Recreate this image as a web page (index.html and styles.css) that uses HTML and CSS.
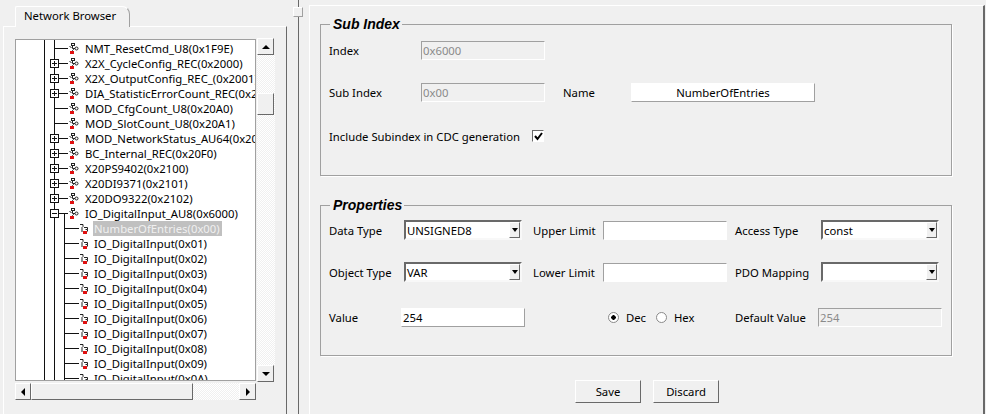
FILE: index.html
```html
<!DOCTYPE html>
<html lang="en">
<head>
    <meta charset="UTF-8">
    <meta name="viewport" content="width=device-width, initial-scale=1.0">
    <title>Network Browser</title>
    <link rel="stylesheet" href="styles.css">
</head>
<body>
    <svg class="icon-defs" width="0" height="0">
        <symbol id="icon-object" viewBox="0 0 11 11">
            <rect x="3.500" y="0.500" width="3" height="2" fill="#fff" stroke="#222"/>
            <path d="M4.500 3v2.500l1 1-1 1v1M1.500 3.500l2 1M5 5.500h2" fill="none" stroke="#222"/>
            <circle cx="8.500" cy="5.500" r="1.500" fill="#fff" stroke="#222"/>
            <rect x="2" y="8" width="4" height="3" fill="#e01010"/>
        </symbol>
        <symbol id="icon-entry" viewBox="0 0 10 11">
            <path d="M1 1.500h3v2l-1 1v4.500" fill="none" stroke="#222"/>
            <path d="M5 4.500h3.500v2h-2M8.500 6.500v2" fill="none" stroke="#222"/>
            <rect x="4" y="8" width="4" height="3" fill="#e01010"/>
        </symbol>
    </svg>

    <div class="window">
        <section class="browser">
            <div class="tab">Network Browser</div>
            <div class="tab-pane">
                <div class="tree-wrap">
                    <div class="tree">
                        <i class="guide guide-a"></i>
                        <i class="guide guide-b"></i>
                        <i class="guide guide-c"></i>

                        <div class="row"><i class="link"></i><svg class="icon"><use href="#icon-object"/></svg><span class="name">NMT_ResetCmd_U8(0x1F9E)</span></div>
                        <div class="row"><b class="plus"></b><i class="link"></i><svg class="icon"><use href="#icon-object"/></svg><span class="name">X2X_CycleConfig_REC(0x2000)</span></div>
                        <div class="row"><b class="plus"></b><i class="link"></i><svg class="icon"><use href="#icon-object"/></svg><span class="name">X2X_OutputConfig_REC_(0x2001)</span></div>
                        <div class="row"><b class="plus"></b><i class="link"></i><svg class="icon"><use href="#icon-object"/></svg><span class="name">DIA_StatisticErrorCount_REC(0x2000)</span></div>
                        <div class="row"><i class="link"></i><svg class="icon"><use href="#icon-object"/></svg><span class="name">MOD_CfgCount_U8(0x20A0)</span></div>
                        <div class="row"><i class="link"></i><svg class="icon"><use href="#icon-object"/></svg><span class="name">MOD_SlotCount_U8(0x20A1)</span></div>
                        <div class="row"><b class="plus"></b><i class="link"></i><svg class="icon"><use href="#icon-object"/></svg><span class="name">MOD_NetworkStatus_AU64(0x2000)</span></div>
                        <div class="row"><b class="plus"></b><i class="link"></i><svg class="icon"><use href="#icon-object"/></svg><span class="name">BC_Internal_REC(0x20F0)</span></div>
                        <div class="row"><b class="plus"></b><i class="link"></i><svg class="icon"><use href="#icon-object"/></svg><span class="name">X20PS9402(0x2100)</span></div>
                        <div class="row"><b class="plus"></b><i class="link"></i><svg class="icon"><use href="#icon-object"/></svg><span class="name">X20DI9371(0x2101)</span></div>
                        <div class="row"><b class="plus"></b><i class="link"></i><svg class="icon"><use href="#icon-object"/></svg><span class="name">X20DO9322(0x2102)</span></div>
                        <div class="row"><b class="plus minus"></b><i class="link"></i><svg class="icon"><use href="#icon-object"/></svg><span class="name">IO_DigitalInput_AU8(0x6000)</span></div>

                        <div class="row child"><i class="link"></i><svg class="icon"><use href="#icon-entry"/></svg><span class="name selected">NumberOfEntries(0x00)</span></div>
                        <div class="row child"><i class="link"></i><svg class="icon"><use href="#icon-entry"/></svg><span class="name">IO_DigitalInput(0x01)</span></div>
                        <div class="row child"><i class="link"></i><svg class="icon"><use href="#icon-entry"/></svg><span class="name">IO_DigitalInput(0x02)</span></div>
                        <div class="row child"><i class="link"></i><svg class="icon"><use href="#icon-entry"/></svg><span class="name">IO_DigitalInput(0x03)</span></div>
                        <div class="row child"><i class="link"></i><svg class="icon"><use href="#icon-entry"/></svg><span class="name">IO_DigitalInput(0x04)</span></div>
                        <div class="row child"><i class="link"></i><svg class="icon"><use href="#icon-entry"/></svg><span class="name">IO_DigitalInput(0x05)</span></div>
                        <div class="row child"><i class="link"></i><svg class="icon"><use href="#icon-entry"/></svg><span class="name">IO_DigitalInput(0x06)</span></div>
                        <div class="row child"><i class="link"></i><svg class="icon"><use href="#icon-entry"/></svg><span class="name">IO_DigitalInput(0x07)</span></div>
                        <div class="row child"><i class="link"></i><svg class="icon"><use href="#icon-entry"/></svg><span class="name">IO_DigitalInput(0x08)</span></div>
                        <div class="row child"><i class="link"></i><svg class="icon"><use href="#icon-entry"/></svg><span class="name">IO_DigitalInput(0x09)</span></div>
                        <div class="row child"><i class="link"></i><svg class="icon"><use href="#icon-entry"/></svg><span class="name">IO_DigitalInput(0x0A)</span></div>
                    </div>

                    <div class="vscroll">
                        <div class="sbtn"><i class="arrow-up"></i></div>
                        <div class="vtrack"><div class="vthumb"></div></div>
                        <div class="sbtn"><i class="arrow-down"></i></div>
                    </div>

                    <div class="hscroll">
                        <div class="sbtn sbtn-left"><i class="arrow-left"></i></div>
                        <div class="hthumb"></div>
                        <div class="htrack"></div>
                        <div class="sbtn"><i class="arrow-right"></i></div>
                    </div>
                </div>
            </div>
        </section>

        <div class="splitter"><i class="splitter-handle"></i></div>

        <main class="editor">
            <fieldset class="group group-sub">
                <legend>Sub Index</legend>
                <div class="sub-row sub-row-first">
                    <label class="sub-label">Index</label>
                    <div class="field readonly">0x6000</div>
                </div>
                <div class="sub-row">
                    <label class="sub-label">Sub Index</label>
                    <div class="field readonly">0x00</div>
                    <label class="name-label">Name</label>
                    <div class="field name-field">NumberOfEntries</div>
                </div>
                <div class="sub-row">
                    <label class="include-label">Include Subindex in CDC generation</label>
                    <span class="check">
                        <svg width="9" height="9" viewBox="0 0 9 9"><path d="M1 4l2.500 3L8 1" fill="none" stroke="#000" stroke-width="2"/></svg>
                    </span>
                </div>
            </fieldset>

            <fieldset class="group group-props">
                <legend>Properties</legend>
                <div class="props">
                    <label>Data Type</label>
                    <div class="combo">UNSIGNED8<span class="combo-btn"><i class="arrow-down"></i></span></div>
                    <label class="col-mid">Upper Limit</label>
                    <div class="field"></div>
                    <label class="col-far">Access Type</label>
                    <div class="combo">const<span class="combo-btn"><i class="arrow-down"></i></span></div>

                    <label>Object Type</label>
                    <div class="combo">VAR<span class="combo-btn"><i class="arrow-down"></i></span></div>
                    <label class="col-mid">Lower Limit</label>
                    <div class="field"></div>
                    <label class="col-far">PDO Mapping</label>
                    <div class="combo"><span class="combo-btn"><i class="arrow-down"></i></span></div>

                    <label>Value</label>
                    <div class="field value">254</div>
                    <div class="radios">
                        <span class="radio on"></span><span class="radio-text">Dec</span>
                        <span class="radio"></span><span class="radio-text">Hex</span>
                    </div>
                    <label class="col-far">Default Value</label>
                    <div class="field readonly value">254</div>
                </div>
            </fieldset>

            <div class="actions">
                <button type="button" class="btn">Save</button>
                <button type="button" class="btn">Discard</button>
            </div>
        </main>
    </div>
</body>
</html>
```

FILE: styles.css
```css
/* General page */
body {
    margin: 0;
    background-color: #f0f0f0;
    font-family: "Noto Sans", sans-serif;
    font-size: 11.3px;
    color: #000;
}

.icon-defs {
    position: absolute;
}

.window {
    display: flex;
    height: 414px;
    padding-top: 6px;
    box-sizing: border-box;
    overflow: hidden;
}

/* Left side, network browser */
.browser {
    display: flex;
    flex-direction: column;
    width: 284px;
    margin-left: 3px;
    flex: none;
}

.tab {
    position: relative;
    width: 115px;
    height: 21px;
    margin: 0 0 -1px 12px;
    padding-left: 8px;
    box-sizing: border-box;
    line-height: 18px;
    background-color: #f0f0f0;
    border: 1px solid #fff;
    border-right: 1px solid #a0a0a0;
    border-bottom: none;
    border-radius: 2px 8px 0 0;
}

.tab-pane {
    flex: 1;
    padding: 11px 0 0 11px;
    box-sizing: border-box;
    border-top: 1px solid #fff;
    border-left: 1px solid #fff;
    border-right: 1px solid #696969;
}

.tree-wrap {
    display: grid;
    grid-template-columns: 241px 18px;
    grid-template-rows: 344px 17px;
    column-gap: 1px;
    row-gap: 1px;
}

.tree {
    position: relative;
    height: 342px;
    margin-top: 1px;
    padding-top: 1px;
    box-sizing: border-box;
    overflow: hidden;
    background-color: #fff;
    border: 1px solid #a0a0a0;
}

.guide {
    position: absolute;
    top: 0;
    bottom: 0;
    width: 1px;
    background-color: #111;
}

.guide-a { left: 28px; }
.guide-b { left: 38px; }
.guide-c { left: 48px; top: 173px; }

.row {
    position: relative;
    display: flex;
    align-items: center;
    height: 15px;
    padding-left: 39px;
    white-space: nowrap;
}

.row.child {
    padding-left: 49px;
}

.link {
    width: 13px;
    height: 1px;
    flex: none;
    background-color: #111;
}

.row.child .link {
    width: 14px;
}

.icon {
    width: 11px;
    height: 11px;
    flex: none;
}

.row.child .icon {
    width: 10px;
}

.name {
    margin-left: 5px;
    padding: 0 1px;
    line-height: 15px;
}

.row.child .name {
    margin-left: 4px;
    padding: 0 2px 0 1px;
}

.name.selected {
    background-color: #c0c0c0;
    color: #f0f0f0;
}

/* the little +/- box sits on top of the row line */
.plus {
    position: absolute;
    left: 34px;
    top: 3px;
    width: 7px;
    height: 7px;
    background:
        linear-gradient(#111, #111) center / 5px 1px no-repeat,
        linear-gradient(#111, #111) center / 1px 5px no-repeat,
        #fff;
    border: 1px solid #111;
}

.plus.minus {
    background:
        linear-gradient(#111, #111) center / 5px 1px no-repeat,
        #fff;
}

/* Scrollbars */
.vscroll {
    display: flex;
    flex-direction: column;
    height: 344px;
}

.hscroll {
    display: flex;
    height: 17px;
    grid-column: 1;
}

.sbtn {
    display: flex;
    align-items: center;
    justify-content: center;
    flex: none;
    width: 17px;
    height: 17px;
    box-sizing: border-box;
    background-color: #f0f0f0;
    border: 1px solid;
    border-color: #fff #696969 #696969 #fff;
}

.sbtn-left {
    width: 16px;
}

.vtrack,
.htrack {
    flex: 1;
    background: repeating-conic-gradient(#f0f0f0 0 25%, #fff 0 50%) 0 0 / 2px 2px;
}

.vthumb {
    width: 17px;
    height: 22px;
    margin-top: 38px;
    box-sizing: border-box;
    background-color: #f0f0f0;
    border: 1px solid;
    border-color: #fff #696969 #696969 #fff;
}

.hthumb {
    width: 162px;
    height: 17px;
    flex: none;
    box-sizing: border-box;
    background-color: #f0f0f0;
    border: 1px solid;
    border-color: #fff #696969 #696969 #fff;
}

.arrow-up,
.arrow-down {
    width: 0;
    height: 0;
    border-left: 4px solid transparent;
    border-right: 4px solid transparent;
}

.arrow-up { border-bottom: 4px solid #000; }
.arrow-down { border-top: 4px solid #000; }

.arrow-left,
.arrow-right {
    width: 0;
    height: 0;
    border-top: 4px solid transparent;
    border-bottom: 4px solid transparent;
}

.arrow-left { border-right: 4px solid #000; }
.arrow-right { border-left: 4px solid #000; }

/* Splitter */
.splitter {
    position: relative;
    width: 1px;
    flex: none;
    margin: -6px 0 0 11px;
    background-color: #696969;
}

.splitter-handle {
    position: absolute;
    left: -5px;
    top: 7px;
    width: 10px;
    height: 10px;
    box-sizing: border-box;
    background-color: #f0f0f0;
    border: 1px solid;
    border-color: #fff #a0a0a0 #a0a0a0 #fff;
}

/* Right side, editor */
.editor {
    width: 676px;
    margin: -1px 0 0 10px;
    padding: 9px 0 0 10px;
    box-sizing: border-box;
    flex: none;
    border-top: 1px solid #fff;
    border-left: 1px solid #fff;
    border-right: 2px solid #696969;
}

.group {
    width: 632px;
    margin: 0;
    padding: 0 0 0 8px;
    box-sizing: border-box;
    border: 1px solid #a0a0a0;
    box-shadow: 1px 1px 0 #fff;
}

.group legend {
    margin-left: 1px;
    padding: 0 2px 0 3px;
    font-family: "Liberation Sans", sans-serif;
    font-size: 14px;
    font-style: italic;
    font-weight: bold;
    line-height: 18px;
    color: #000;
}

.group-sub {
    height: 161px;
}

.group-props {
    height: 160px;
    margin-top: 20px;
}

.sub-row {
    display: flex;
    align-items: center;
    height: 20px;
    margin-top: 22px;
}

.sub-row:last-child {
    margin-top: 24px;
}

.sub-row-first {
    margin-top: 7px;
}

.sub-label {
    width: 92px;
    flex: none;
}

.name-label {
    width: 68px;
    margin-left: 18px;
    flex: none;
}

.include-label {
    width: 203px;
    flex: none;
}

.field {
    width: 124px;
    height: 19px;
    padding-left: 1px;
    box-sizing: border-box;
    line-height: 17px;
    background-color: #fff;
    border: 1px solid;
    border-color: #a0a0a0 #fff #fff #a0a0a0;
}

.field.readonly {
    background-color: #f0f0f0;
    color: #8a8a8a;
}

.name-field {
    width: 184px;
    padding: 0;
    text-align: center;
    border-color: #fff #a0a0a0 #a0a0a0 #fff;
}

.check {
    display: flex;
    align-items: center;
    justify-content: center;
    width: 12px;
    height: 12px;
    box-sizing: border-box;
    background-color: #fff;
    border: 1px solid;
    border-color: #696969 #fff #fff #696969;
}

.props {
    display: grid;
    grid-template-columns: 75px 118px 81px 124px 94px 118px;
    grid-template-rows: 20px 20px 26px;
    row-gap: 22px;
    align-items: center;
    margin-top: 6px;
}

.col-mid {
    padding-left: 11px;
}

.col-far {
    padding-left: 8px;
}

.combo {
    position: relative;
    height: 20px;
    padding-left: 1px;
    box-sizing: border-box;
    line-height: 17px;
    background-color: #fff;
    border: 2px solid;
    border-color: #696969 #f8f8f8 #f8f8f8 #696969;
}

.combo-btn {
    position: absolute;
    top: 0;
    right: 0;
    display: flex;
    align-items: center;
    justify-content: center;
    width: 11px;
    height: 16px;
    box-sizing: border-box;
    background-color: #f0f0f0;
    border: 1px solid;
    border-color: #fff #696969 #696969 #fff;
}

.combo-btn .arrow-down {
    border-left-width: 3px;
    border-right-width: 3px;
}

.field.value {
    margin-left: -3px;
    border-color: #fff #a0a0a0 #a0a0a0 #fff;
}

.field.readonly.value {
    border-color: #a0a0a0 #fff #fff #a0a0a0;
}

.radios {
    display: flex;
    align-items: center;
    grid-column: 3 / span 2;
    padding-left: 86px;
}

.radio {
    width: 11px;
    height: 11px;
    flex: none;
    box-sizing: border-box;
    background-color: #fff;
    border: 1px solid #8a8a8a;
    border-radius: 50%;
}

.radio.on {
    background: radial-gradient(circle, #000 0 2px, #fff 2.500px);
}

.radio-text {
    width: 30px;
    margin-left: 7px;
}

/* Buttons */
.actions {
    display: flex;
    gap: 12px;
    margin: 24px 0 0 255px;
}

.btn {
    width: 66px;
    height: 23px;
    padding: 0;
    font: inherit;
    color: inherit;
    background-color: #f0f0f0;
    border: 1px solid;
    border-color: #fff #696969 #696969 #fff;
}
```
